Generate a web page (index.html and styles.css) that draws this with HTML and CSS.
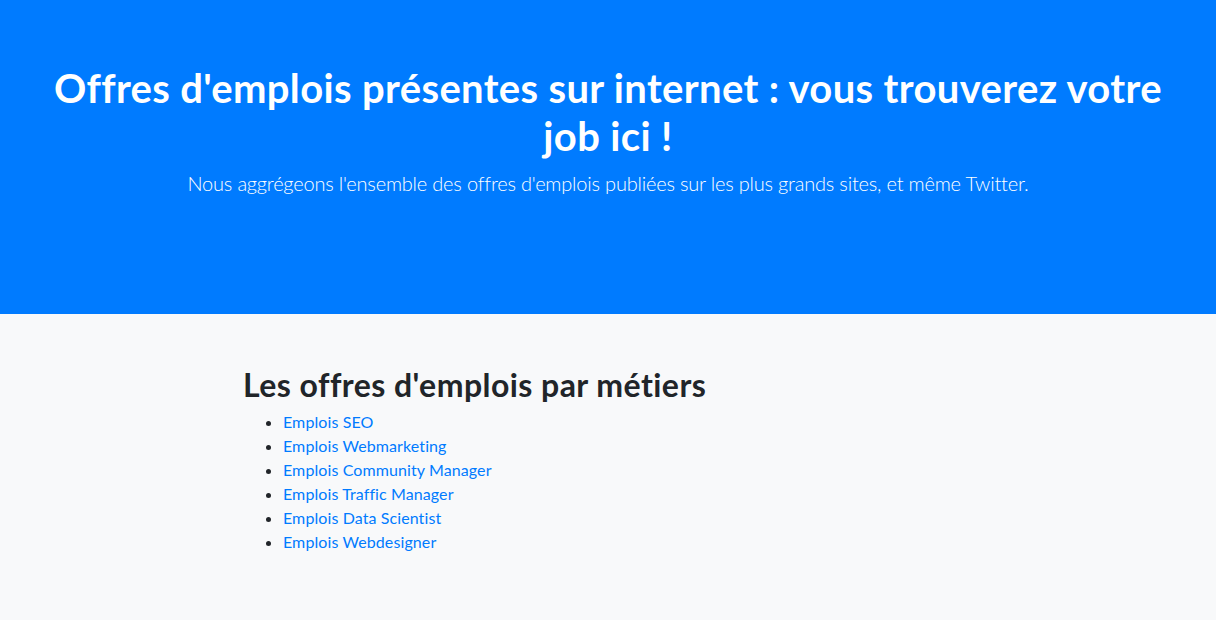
FILE: index.html
```html
<!DOCTYPE html>
<html lang="fr">
<head>
    <meta charset="UTF-8">
    <meta name="viewport" content="width=device-width, initial-scale=1.0">
    <title>Offres d'emplois</title>
    <link rel="stylesheet" href="styles.css">
</head>
<body>
    <header class="jumbotron">
        <div class="container">
            <h1 class="title">Offres d'emplois présentes sur internet : vous trouverez votre job ici !</h1>
            <p class="lead">Nous aggrégeons l'ensemble des offres d'emplois publiées sur les plus grands sites, et même Twitter.</p>
        </div>
    </header>

    <section class="metiers">
        <div class="container">
            <div class="row">
                <div class="metiers-col">
                    <h2 class="metiers-title">Les offres d'emplois par métiers</h2>
                    <ul class="metiers-list">
                        <li><a href="#">Emplois SEO</a></li>
                        <li><a href="#">Emplois Webmarketing</a></li>
                        <li><a href="#">Emplois Community Manager</a></li>
                        <li><a href="#">Emplois Traffic Manager</a></li>
                        <li><a href="#">Emplois Data Scientist</a></li>
                        <li><a href="#">Emplois Webdesigner</a></li>
                    </ul>
                </div>
            </div>
        </div>
    </section>
</body>
</html>
```

FILE: styles.css
```css
* {
    box-sizing: border-box;
}

body {
    margin: 0;
    font-family: 'Lato', 'Open Sans', sans-serif;
    font-size: 16px;
    line-height: 1.5;
    color: #212529;
    background: #fff;
}

.container {
    max-width: 1140px;
    margin: 0 auto;
    padding: 0 15px;
}

.row {
    margin: 0 -15px;
}

/* Bandeau bleu */
.jumbotron {
    background: #007bff;
    color: #fff;
    text-align: center;
    padding: 64px 0 116px;
}

.title {
    margin: 0 0 8px;
    font-size: 40px;
    font-weight: 700;
    line-height: 1.2;
    letter-spacing: 0.35px;
}

.lead {
    margin: 0;
    font-size: 20px;
    font-weight: 300;
    line-height: 1.5;
    letter-spacing: -0.2px;
}

/* Liste des métiers */
.metiers {
    background: #f8f9fa;
    padding: 52px 0 50px;
}

.metiers-col {
    margin-left: 16.6667%;
    width: 66.6667%;
    padding: 0 15px;
}

.metiers-title {
    margin: 0 0 6px;
    font-size: 32px;
    font-weight: 700;
    line-height: 1.2;
    letter-spacing: 0.45px;
}

.metiers-list {
    margin: 0 0 16px;
    padding-left: 40px;
    letter-spacing: 0.1px;
}

.metiers-list a {
    color: #007bff;
    text-decoration: none;
}
```
